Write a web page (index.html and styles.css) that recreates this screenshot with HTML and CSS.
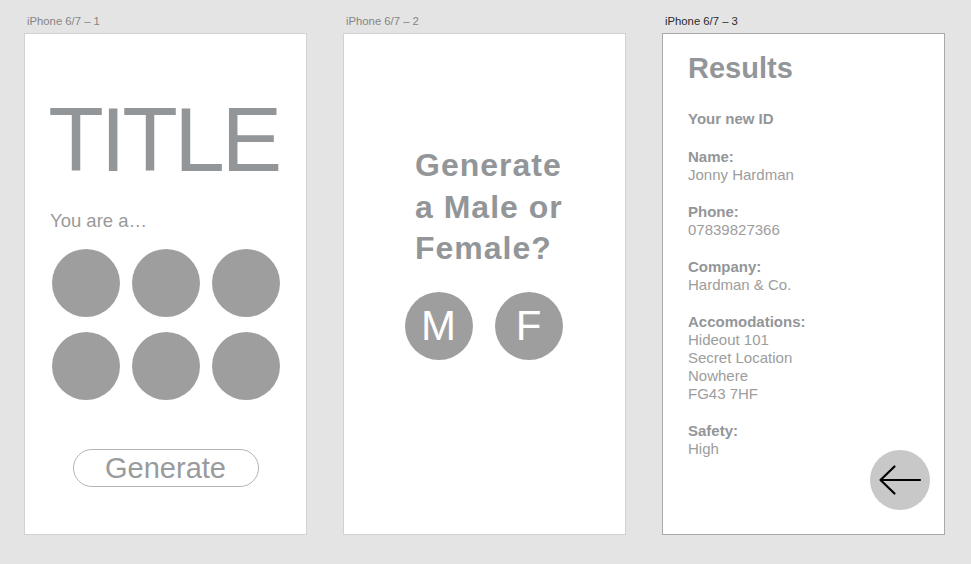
FILE: index.html
```html
<!DOCTYPE html>
<html lang="en">
<head>
<meta charset="utf-8">
<title>iPhone artboards</title>
<link rel="stylesheet" href="styles.css">
</head>
<body>
<div class="canvas">
  <section class="column">
    <div class="label">iPhone 6/7 – 1</div>
    <div class="board board-one">
      <h1 class="title">TITLE</h1>
      <p class="prompt">You are a…</p>
      <div class="dots">
        <span class="dot"></span><span class="dot"></span><span class="dot"></span>
        <span class="dot"></span><span class="dot"></span><span class="dot"></span>
      </div>
      <button class="generate">Generate</button>
    </div>
  </section>

  <section class="column">
    <div class="label">iPhone 6/7 – 2</div>
    <div class="board board-two">
      <h2 class="question">Generate<br>a Male or<br>Female?</h2>
      <div class="choices">
        <span class="choice">M</span>
        <span class="choice">F</span>
      </div>
    </div>
  </section>

  <section class="column">
    <div class="label label-active">iPhone 6/7 – 3</div>
    <div class="board board-three">
      <h2 class="results">Results</h2>
      <div class="idhead">Your new ID</div>
      <div class="group group-first"><div class="key">Name:</div><div class="val">Jonny Hardman</div></div>
      <div class="group"><div class="key">Phone:</div><div class="val">07839827366</div></div>
      <div class="group"><div class="key">Company:</div><div class="val">Hardman &amp; Co.</div></div>
      <div class="group"><div class="key">Accomodations:</div><div class="val">Hideout 101</div><div class="val">Secret Location</div><div class="val">Nowhere</div><div class="val">FG43 7HF</div></div>
      <div class="group"><div class="key">Safety:</div><div class="val">High</div></div>
      <button class="back" aria-label="Back">
        <svg width="60" height="60" viewBox="0 0 60 60"><path d="M10.5 30H50M24.5 16.5L10.5 30L24.5 43.5" fill="none" stroke="#000" stroke-width="2.2" stroke-linecap="round" stroke-linejoin="round"/></svg>
      </button>
    </div>
  </section>
</div>
</body>
</html>
```

FILE: styles.css
```css
* { box-sizing: border-box; }
html, body { margin: 0; padding: 0; }
body {
  background: #e4e4e4;
  font-family: "Liberation Sans", Arial, sans-serif;
  width: 971px;
  height: 564px;
  overflow: hidden;
}
.canvas {
  display: flex;
  gap: 36px;
  padding: 15px 0 0 24px;
}
.column {
  display: flex;
  flex-direction: column;
  width: 283px;
}
.label {
  font-size: 11.3px;
  line-height: 13px;
  height: 13px;
  color: #858585;
  padding-left: 3px;
  margin-bottom: 5px;
}
.label-active { color: #2b2b2b; }
.board {
  position: relative;
  height: 502px;
  background: #fff;
  border: 1px solid #d2d2d2;
}
.board-three { border-color: #a9a9a9; }

/* board one */
.board-one {
  display: flex;
  flex-direction: column;
  align-items: center;
}
.title {
  margin: 60px 4px 0 0;
  font-size: 91px;
  line-height: 91px;
  font-weight: normal;
  letter-spacing: -3.5px;
  color: #939698;
  padding-left: 0;
}
.prompt {
  align-self: stretch;
  margin: 25px 0 0 0;
  padding-left: 25px;
  font-size: 18.5px;
  line-height: 22px;
  color: #9a9a9a;
}
.dots {
  margin-top: 17px;
  display: grid;
  grid-template-columns: repeat(3, 68px);
  column-gap: 12px;
  row-gap: 15px;
}
.dot {
  width: 68px;
  height: 68px;
  border-radius: 50%;
  background: #9e9e9e;
}
.generate {
  margin-top: 49px;
  width: 186px;
  height: 38px;
  border: 1px solid #b4b4b4;
  border-radius: 19px;
  background: #fff;
  font-family: "Liberation Sans", Arial, sans-serif;
  font-size: 29px;
  line-height: 36px;
  color: #999b9d;
  padding: 0;
}

/* board two */
.board-two {
  display: flex;
  flex-direction: column;
}
.question {
  margin: 111px 0 0 71px;
  font-size: 32px;
  line-height: 41.5px;
  letter-spacing: 1px;
  font-weight: bold;
  color: #939698;
}
.choices {
  margin-top: 22px;
  display: flex;
  justify-content: center;
  gap: 22px;
  padding-right: 2px;
}
.choice {
  width: 68px;
  height: 68px;
  border-radius: 50%;
  background: #9e9e9e;
  color: #fff;
  font-size: 42px;
  line-height: 42px;
  display: flex;
  align-items: center;
  justify-content: center;
}

/* board three */
.board-three {
  padding-left: 25px;
}
.results {
  margin: 18px 0 0 0;
  font-size: 29px;
  line-height: 32px;
  font-weight: bold;
  color: #939698;
}
.idhead {
  margin-top: 26px;
  font-size: 15px;
  line-height: 18px;
  font-weight: bold;
  color: #939698;
}
.group {
  margin-top: 19px;
  font-size: 15px;
  line-height: 18px;
}
.group-first { margin-top: 20px; }
.key { font-weight: bold; color: #939698; }
.val { color: #9d9d9d; }
.back {
  position: absolute;
  right: 14px;
  bottom: 24px;
  width: 60px;
  height: 60px;
  border: none;
  border-radius: 50%;
  background: #c8c8c8;
  padding: 0;
  display: flex;
}
```
